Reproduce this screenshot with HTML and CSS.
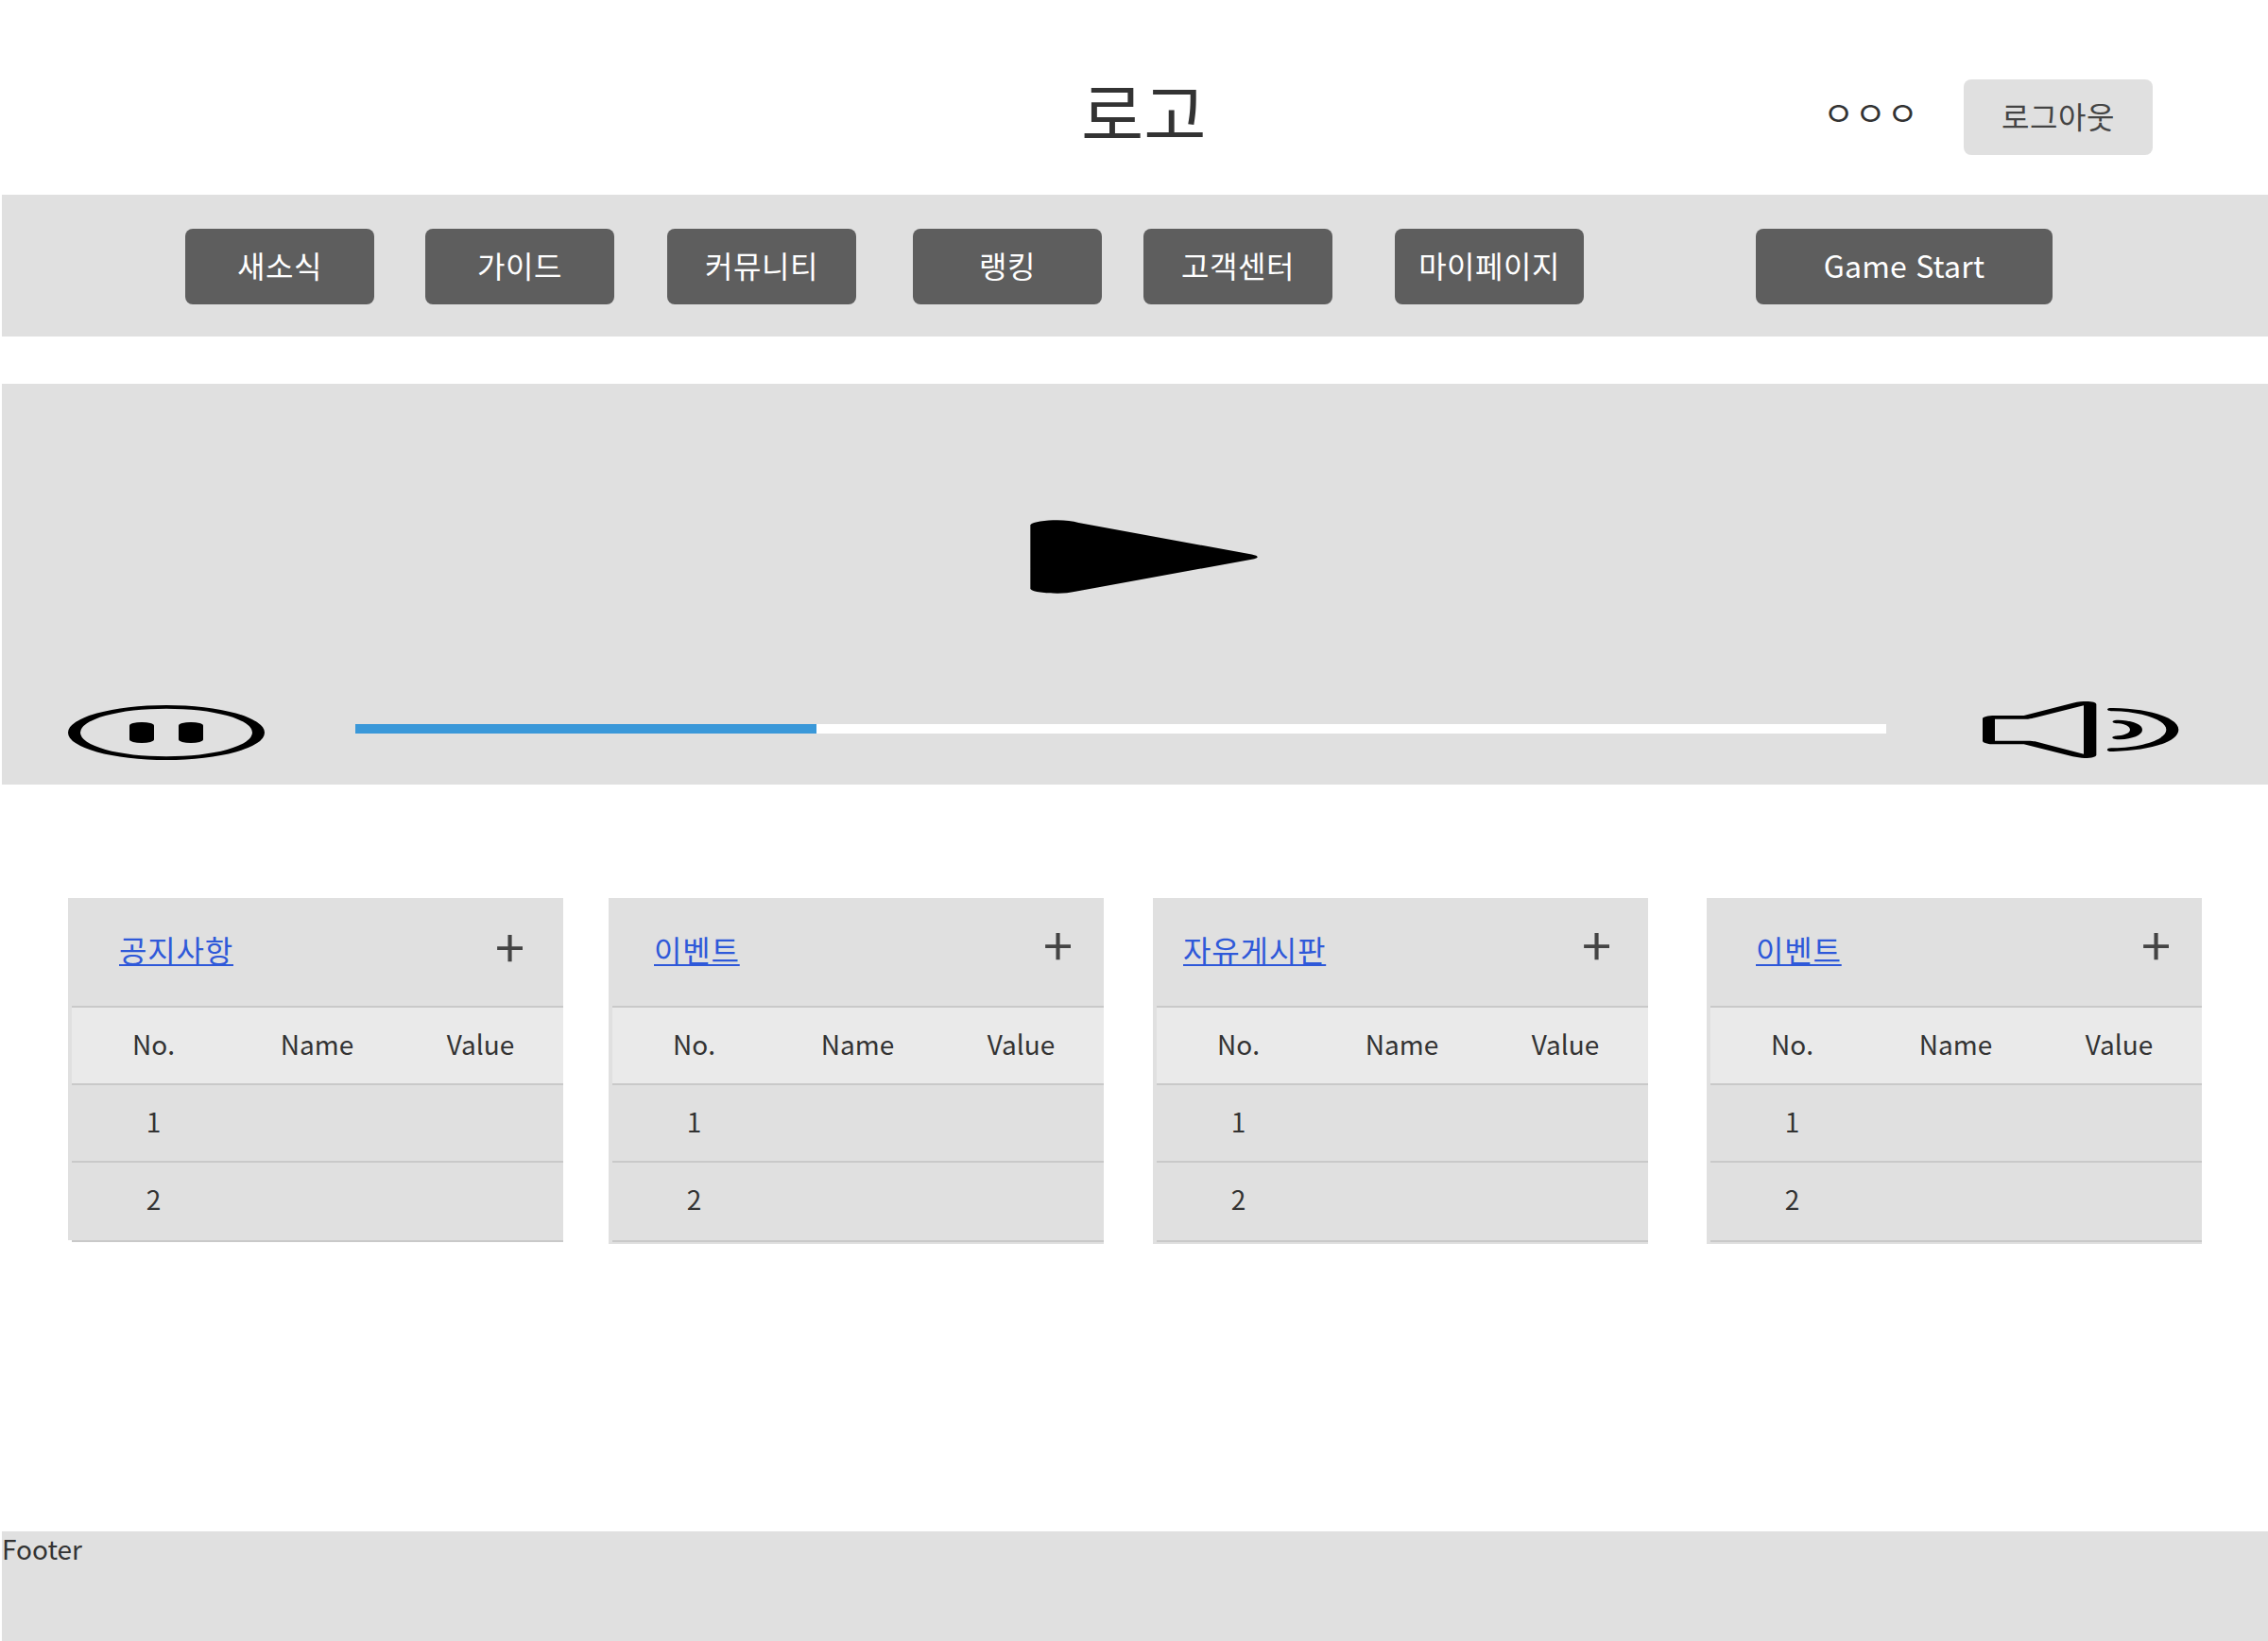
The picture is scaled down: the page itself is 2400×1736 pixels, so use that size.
FILE: index.html
```html
<!DOCTYPE html>
<html lang="ko">
<head>
<meta charset="utf-8">
<title>로고</title>
<link rel="stylesheet" href="styles.css">
</head>
<body>
<header class="header">
  <h1 class="logo">로고</h1>
  <span class="more">ㅇㅇㅇ</span>
  <a class="btn btn-light">로그아웃</a>
</header>
<nav class="nav">
  <a class="btn">새소식</a>
  <a class="btn guide">가이드</a>
  <a class="btn community">커뮤니티</a>
  <a class="btn ranking">랭킹</a>
  <a class="btn support">고객센터</a>
  <a class="btn mypage">마이페이지</a>
  <a class="btn start">Game Start</a>
</nav>
<section class="video">
  <svg class="play" viewBox="91 89 723 235" preserveAspectRatio="none"><path d="M92 105C100 95 140 90 178 90C205 90 225 93 245 98L795 199C819 204 819 210 795 215L235 317C218 321 200 323 178 323C140 323 100 319 92 309Z"/></svg>
  <div class="controls">
    <svg class="pause" viewBox="66 78 624 174" preserveAspectRatio="none"><path fill-rule="evenodd" d="M66 165a312 87 0 1 0 624 0a312 87 0 1 0-624 0ZM105 165a273 76 0 1 1 546 0a273 76 0 1 1-546 0Z"/><rect x="261" y="132" width="78" height="66" rx="39" ry="11"/><rect x="417" y="132" width="78" height="66" rx="39" ry="11"/></svg>
    <div class="track"><div class="played"></div></div>
    <svg class="volume" viewBox="114 66 624 180" preserveAspectRatio="none"><path fill-rule="evenodd" d="M114 121C114 115 130 111 153 111H245L400 71C418 66 432 66 443 66C462 66 475 70 475 75V236C475 241 462 246 437 246C425 246 412 243 400 241L245 202H153C130 202 114 197 114 191ZM153 122H258C268 121 275 119 280 118L435 79V233L280 193C275 192 268 191 258 191H153Z"/><path d="M529 87C645 89 736 118 736 156C736 195 645 222 529 225C515 226 508 223 510 218C512 214 520 214 529 214C620 212 697 187 697 156C697 125 620 99 529 97C518 97 510 96 510 91C511 87 520 86 529 87Z"/><path d="M545 125C588 127 621 138 621 156C621 174 588 185 552 187C535 187 525 184 526 180C528 176 538 176 545 175C567 173 582 165 582 156C582 146 567 138 545 136C532 135 525 133 527 129C529 126 537 125 545 125Z"/></svg>
  </div>
</section>
<main class="boards">
  <section class="board notice">
    <div class="head"><a class="link">공지사항</a><span class="plus">+</span></div>
    <div class="table">
      <div class="row th"><span>No.</span><span>Name</span><span>Value</span></div>
      <div class="row"><span>1</span><span></span><span></span></div>
      <div class="row last"><span>2</span><span></span><span></span></div>
    </div>
  </section>
  <section class="board event">
    <div class="head"><a class="link">이벤트</a><span class="plus">+</span></div>
    <div class="table">
      <div class="row th"><span>No.</span><span>Name</span><span>Value</span></div>
      <div class="row"><span>1</span><span></span><span></span></div>
      <div class="row last"><span>2</span><span></span><span></span></div>
    </div>
  </section>
  <section class="board free">
    <div class="head"><a class="link">자유게시판</a><span class="plus">+</span></div>
    <div class="table">
      <div class="row th"><span>No.</span><span>Name</span><span>Value</span></div>
      <div class="row"><span>1</span><span></span><span></span></div>
      <div class="row last"><span>2</span><span></span><span></span></div>
    </div>
  </section>
  <section class="board event2">
    <div class="head"><a class="link">이벤트</a><span class="plus">+</span></div>
    <div class="table">
      <div class="row th"><span>No.</span><span>Name</span><span>Value</span></div>
      <div class="row"><span>1</span><span></span><span></span></div>
      <div class="row last"><span>2</span><span></span><span></span></div>
    </div>
  </section>
</main>
<footer class="footer">Footer</footer>
</body>
</html>
```
FILE: styles.css
```css
* { box-sizing: border-box; }
body {
  margin: 0;
  width: 2400px;
  height: 1736px;
  padding-left: 2px;
  display: flex;
  flex-direction: column;
  background: #fff;
  color: #333;
  font-family: "Noto Sans CJK KR", sans-serif;
  overflow: hidden;
}
svg { display: block; fill: #000; }

.header {
  height: 206px;
  display: flex;
  align-items: flex-start;
  justify-content: flex-end;
  padding-right: 122px;
}
.logo {
  margin: 65px 0 0;
  width: 785px;
  font-size: 72px;
  font-weight: 400;
  line-height: 104px;
}
.more {
  width: 149px;
  margin-top: 92px;
  font-size: 36px;
  line-height: 52px;
  letter-spacing: 0.7px;
}

.btn {
  flex: none;
  width: 200px;
  height: 80px;
  border-radius: 8px;
  background: #5e5e5e;
  color: #fff;
  font-size: 32px;
  line-height: 76px;
  letter-spacing: 0.5px;
  text-align: center;
  white-space: nowrap;
}
.header .btn-light { margin-top: 84px; background: #e0e0e0; color: #444; }

.nav {
  height: 150px;
  padding: 36px 0 0 194px;
  display: flex;
  background: #e0e0e0;
}
.guide { margin-left: 54px; }
.community { margin-left: 56px; }
.ranking { margin-left: 60px; }
.support { margin-left: 44px; }
.mypage { margin-left: 66px; }
.start { width: 314px; margin-left: 182px; letter-spacing: 0.2px; }

.video {
  height: 424px;
  margin-top: 50px;
  padding-top: 144px;
  background: #e0e0e0;
}
.play { width: 241px; height: 78px; margin-left: 1088px; }
.controls { display: flex; margin: 114px 0 0 70px; }
.pause { width: 208px; height: 58px; margin-top: 4px; }
.track { width: 1620px; height: 10px; margin: 24px 102px 0 96px; background: #fff; }
.played { width: 488px; height: 10px; background: #3a98d9; }
.volume { width: 208px; height: 60px; }

.boards { display: flex; align-items: flex-start; margin-top: 120px; padding-left: 70px; height: 670px; }
.board { width: 524px; height: 366px; background: #e0e0e0; }
.notice { height: 362px; }
.event { margin-left: 48px; }
.free { margin-left: 52px; }
.event2 { margin-left: 62px; }
.head { height: 114px; display: flex; justify-content: space-between; padding: 0 28px 0 54px; }
.event .head { padding-left: 48px; padding-right: 20px; }
.free .head { padding-left: 32px; padding-right: 26px; }
.event2 .head { padding-left: 52px; padding-right: 20px; }
.link {
  color: #2f59d9;
  font-size: 32px;
  line-height: 108px;
  letter-spacing: 0.8px;
  text-decoration: underline;
  text-decoration-thickness: 2px;
  text-underline-offset: 2px;
  text-decoration-skip-ink: none;
}
.plus { width: 57px; font-size: 56px; line-height: 96px; text-align: center; color: #444; }
.notice .plus { line-height: 100px; }

.table { margin-left: 4px; border-top: 2px solid #c9c9c9; }
.row {
  display: grid;
  grid-template-columns: repeat(3, 1fr);
  height: 82px;
  padding-right: 1px;
  border-bottom: 2px solid #c9c9c9;
  font-size: 28px;
  line-height: 76px;
  text-align: center;
}
.row.th { background: #eaeaea; }
.row.last { height: 84px; }

.footer { height: 116px; background: #e0e0e0; font-size: 28px; line-height: 36px; }
```
